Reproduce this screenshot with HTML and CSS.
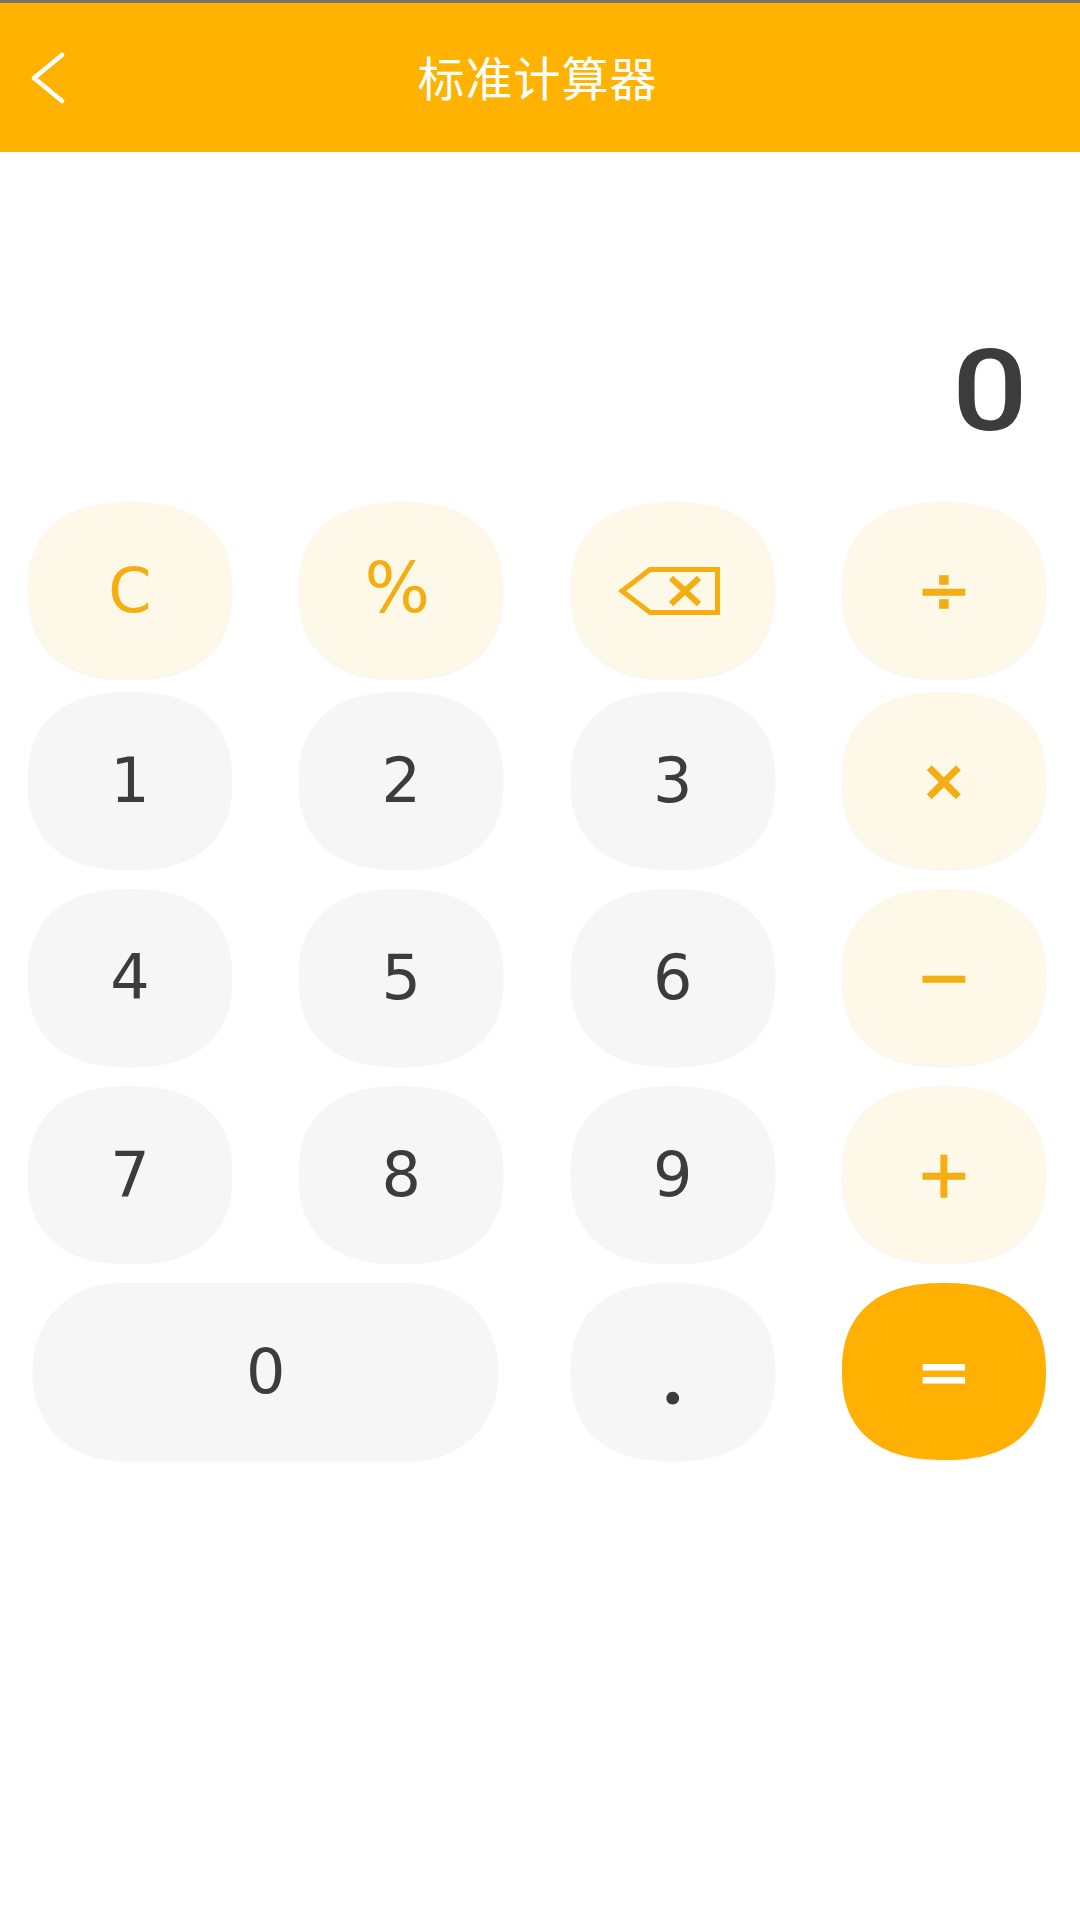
FILE: index.html
```html
<!DOCTYPE html>
<html lang="zh-CN">
<head>
    <meta charset="UTF-8" />
    <meta name="viewport" content="width=device-width, initial-scale=1.0"/>
    <title>标准计算器</title>
    <link rel="stylesheet" href="styles.css">
</head>
<body>
<header class="topbar">
    <button class="back" aria-label="返回">
        <svg width="36" height="52" viewBox="0 0 36 52" fill="none" stroke="#fff" stroke-width="4.5" stroke-linecap="round" stroke-linejoin="round">
            <path d="M32 3 L4 26 L32 49"/>
        </svg>
    </button>
    <h1>标准计算器</h1>
</header>

<div class="display"><span>0</span></div>

<div class="keys keys-top">
    <button class="key op">C</button>
    <button class="key op percent">%</button>
    <button class="key op backspace" aria-label="退格">
        <svg width="102" height="48" viewBox="0 0 102 48" fill="none" stroke="#f5ae12" stroke-width="5">
            <path d="M32 2.5 H99.5 V45.5 H32 L4 24 Z"/>
            <path d="M53 11 L81 37 M81 11 L53 37" stroke-width="6"/>
        </svg>
    </button>
    <button class="key op sym">÷</button>
</div>

<div class="keys">
    <button class="key">1</button>
    <button class="key">2</button>
    <button class="key">3</button>
    <button class="key op sym times">×</button>

    <button class="key">4</button>
    <button class="key">5</button>
    <button class="key">6</button>
    <button class="key op sym">−</button>

    <button class="key">7</button>
    <button class="key">8</button>
    <button class="key">9</button>
    <button class="key op sym">+</button>

    <button class="key zero">0</button>
    <button class="key dot">.</button>
    <button class="key equals sym">=</button>
</div>
</body>
</html>
```

FILE: styles.css
```css
body {
  margin: 0;
  min-height: 1920px;
  background-color: #fff;
  color: #3c3c3c;
  font-family: "DejaVu Sans", "Noto Sans CJK SC", sans-serif;
}

.topbar {
  height: 149px;
  border-top: 3px solid #7b7468;
  background-color: #ffb300;
  display: grid;
  grid-template-columns: 1fr auto 1fr;
  align-items: center;
}

.topbar h1 {
  margin: 0 5px 4px 0;
  color: #fff;
  font-family: "Noto Sans CJK SC", sans-serif;
  font-size: 47px;
  font-weight: 400;
  letter-spacing: 1px;
}

.back {
  justify-self: start;
  display: flex;
  margin-left: 30px;
  padding: 0;
  background: none;
  border: none;
}

.display {
  height: 350px;
  box-sizing: border-box;
  padding: 174px 52px 0 0;
  text-align: right;
  font-family: Roboto, sans-serif;
  font-size: 114px;
  font-weight: 500;
  line-height: 130px;
}

.display span {
  display: inline-block;
  transform: scaleX(1.17);
  transform-origin: right;
}

.keys {
  display: grid;
  grid-template-columns: repeat(4, 204px);
  grid-auto-rows: 177px;
  column-gap: 67.33px;
  row-gap: 20px;
  padding-left: 28px;
}

.keys-top {
  margin-bottom: 13px;
}

.key {
  display: flex;
  align-items: center;
  justify-content: center;
  padding: 0;
  border: none;
  border-radius: 50%;
  corner-shape: superellipse(1.26);
  background-color: #f6f6f6;
  box-shadow: 0 1px 2px rgba(0, 0, 0, 0.06);
  color: #3c3c3c;
  font-family: "DejaVu Sans", sans-serif;
  font-size: 62px;
  line-height: 1;
}

.key.op {
  background-color: #fef8e8;
  color: #f5ae12;
}

.key.sym {
  font-size: 66px;
  -webkit-text-stroke: 1.5px currentColor;
}

.key.times {
  font-size: 54px;
  -webkit-text-stroke: 2.5px currentColor;
}

.key.percent {
  padding: 0 8px 4px 0;
  font-size: 69px;
}

.backspace svg {
  margin-right: 8px;
}

.key.zero {
  grid-column: span 2;
  margin: 0 5px;
  border-radius: 90px / 50%;
  corner-shape: superellipse(1.1);
}

.key.dot {
  font-family: Lato, sans-serif;
  font-size: 84px;
  font-weight: 700;
}

.key.equals {
  background-color: #ffb000;
  color: #fff;
  -webkit-text-stroke: 1px currentColor;
}
```
